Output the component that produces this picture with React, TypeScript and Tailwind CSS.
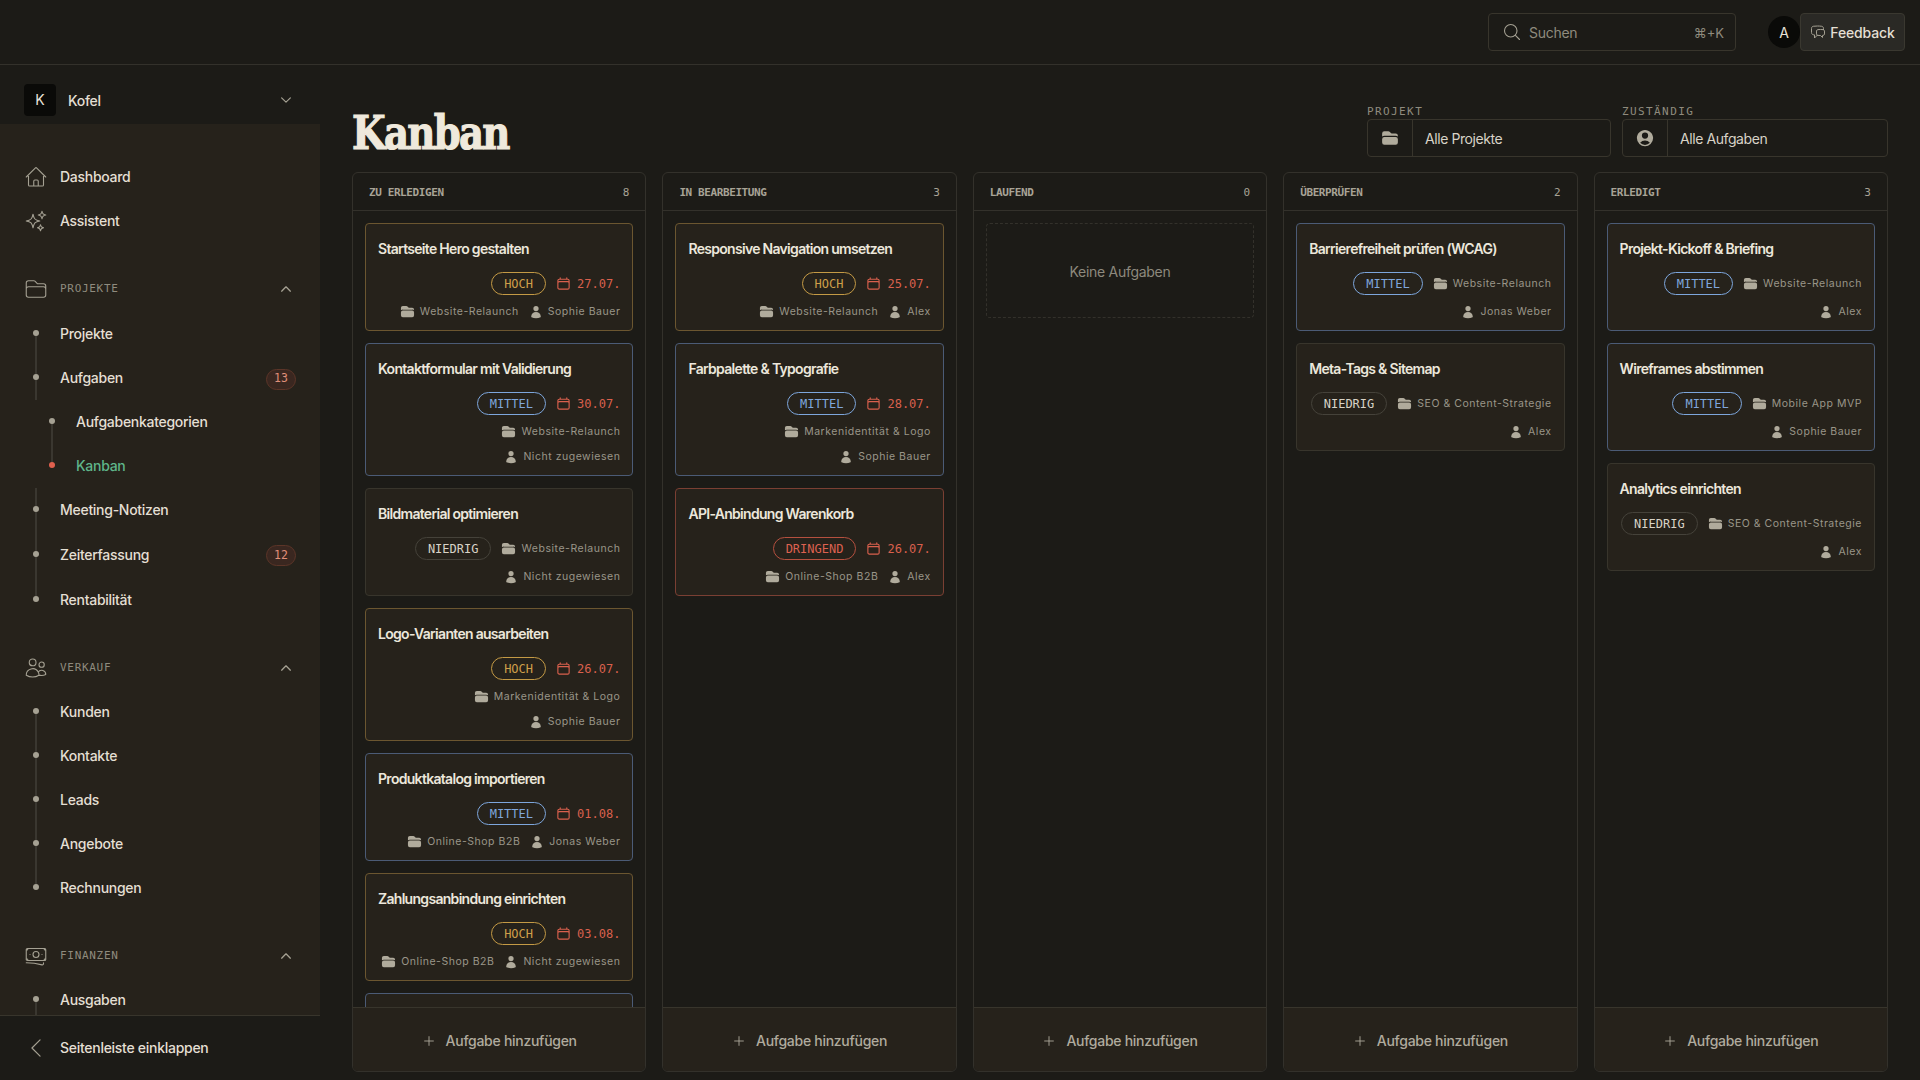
import { ReactNode } from "react";
import {
  HiFolder,
  HiOutlineBanknotes,
  HiOutlineCalendar,
  HiOutlineChatBubbleLeftRight,
  HiOutlineChevronDown,
  HiOutlineChevronLeft,
  HiOutlineChevronUp,
  HiOutlineFolder,
  HiOutlineHome,
  HiOutlineMagnifyingGlass,
  HiOutlinePlus,
  HiOutlineSparkles,
  HiOutlineUsers,
  HiUser,
  HiUserCircle,
} from "react-icons/hi2";

type Priority = "HOCH" | "MITTEL" | "NIEDRIG" | "DRINGEND";

interface Task {
  title: string;
  priority: Priority;
  date?: string;
  project: string;
  person: string;
}

interface Column {
  name: string;
  count: number;
  tasks: Task[];
  clipped?: boolean;
}

const cardBorders: Record<Priority, string> = {
  HOCH: "border-[#6b5630]",
  MITTEL: "border-[#4b5b76]",
  NIEDRIG: "border-[#38352c]",
  DRINGEND: "border-[#7a3f33]",
};

const pills: Record<Priority, string> = {
  HOCH: "border-[#c49a45] text-[#cf9f4a]",
  MITTEL: "border-[#7da6dc] text-[#7fa6dc]",
  NIEDRIG: "border-[#45423a] text-[#d8d3c7]",
  DRINGEND: "border-[#b5503f] text-[#dd6150]",
};

const columns: Column[] = [
  {
    name: "ZU ERLEDIGEN",
    count: 8,
    clipped: true,
    tasks: [
      { title: "Startseite Hero gestalten", priority: "HOCH", date: "27.07.", project: "Website-Relaunch", person: "Sophie Bauer" },
      { title: "Kontaktformular mit Validierung", priority: "MITTEL", date: "30.07.", project: "Website-Relaunch", person: "Nicht zugewiesen" },
      { title: "Bildmaterial optimieren", priority: "NIEDRIG", project: "Website-Relaunch", person: "Nicht zugewiesen" },
      { title: "Logo-Varianten ausarbeiten", priority: "HOCH", date: "26.07.", project: "Markenidentität & Logo", person: "Sophie Bauer" },
      { title: "Produktkatalog importieren", priority: "MITTEL", date: "01.08.", project: "Online-Shop B2B", person: "Jonas Weber" },
      { title: "Zahlungsanbindung einrichten", priority: "HOCH", date: "03.08.", project: "Online-Shop B2B", person: "Nicht zugewiesen" },
    ],
  },
  {
    name: "IN BEARBEITUNG",
    count: 3,
    tasks: [
      { title: "Responsive Navigation umsetzen", priority: "HOCH", date: "25.07.", project: "Website-Relaunch", person: "Alex" },
      { title: "Farbpalette & Typografie", priority: "MITTEL", date: "28.07.", project: "Markenidentität & Logo", person: "Sophie Bauer" },
      { title: "API-Anbindung Warenkorb", priority: "DRINGEND", date: "26.07.", project: "Online-Shop B2B", person: "Alex" },
    ],
  },
  { name: "LAUFEND", count: 0, tasks: [] },
  {
    name: "ÜBERPRÜFEN",
    count: 2,
    tasks: [
      { title: "Barrierefreiheit prüfen (WCAG)", priority: "MITTEL", project: "Website-Relaunch", person: "Jonas Weber" },
      { title: "Meta-Tags & Sitemap", priority: "NIEDRIG", project: "SEO & Content-Strategie", person: "Alex" },
    ],
  },
  {
    name: "ERLEDIGT",
    count: 3,
    tasks: [
      { title: "Projekt-Kickoff & Briefing", priority: "MITTEL", project: "Website-Relaunch", person: "Alex" },
      { title: "Wireframes abstimmen", priority: "MITTEL", project: "Mobile App MVP", person: "Sophie Bauer" },
      { title: "Analytics einrichten", priority: "NIEDRIG", project: "SEO & Content-Strategie", person: "Alex" },
    ],
  },
];

function TreeRow({
  label,
  badge,
  active,
  nested,
  first,
  last,
  tall,
}: {
  label: string;
  badge?: number;
  active?: boolean;
  nested?: boolean;
  first?: boolean;
  last?: boolean;
  tall?: boolean;
}) {
  return (
    <div className={`relative flex items-center pr-6 ${tall ? "h-[45px]" : "h-11"} ${nested ? "pl-[76px]" : "pl-[60px]"}`}>
      {/* connector */}
      {!first && <span className={`absolute top-0 h-1/2 w-0.5 bg-[#3a3730] ${nested ? "left-[51px]" : "left-[35px]"}`} />}
      {!last && <span className={`absolute bottom-0 h-1/2 w-0.5 bg-[#3a3730] ${nested ? "left-[51px]" : "left-[35px]"}`} />}
      <span
        className={`absolute top-[calc(50%-4px)] size-1.5 rounded-full ${nested ? "left-[49px]" : "left-[33px]"} ${
          active ? "bg-[#e0604e]" : "bg-[#a5a193]"
        }`}
      />
      <span className={`flex-1 text-sm font-medium tracking-[-0.02em] ${active ? "text-[#5fb58a]" : "text-[#e4dfd3]"}`}>{label}</span>
      {badge !== undefined && (
        <span className="mt-0.5 flex h-[21px] w-[30px] items-center justify-center rounded-full border border-[#5c3528] bg-[#3a2720] font-['DejaVu_Sans_Mono',monospace] text-[11.5px] text-[#e08f7a]">
          {badge}
        </span>
      )}
    </div>
  );
}

function SectionHead({ icon, label }: { icon: ReactNode; label: string }) {
  return (
    <div className="flex h-[45px] items-center pl-6 pr-[27px]">
      <span className="flex w-9 text-[#a5a193]">{icon}</span>
      <span className="flex-1 pt-px font-['DejaVu_Sans_Mono',monospace] text-[11px] tracking-[0.7px] text-[#8f8b7e]">{label}</span>
      <HiOutlineChevronUp className="size-[14px] text-[#a5a193]" strokeWidth={2.2} />
    </div>
  );
}

function Sidebar() {
  return (
    <aside className="flex w-80 shrink-0 flex-col">
      <div className="h-[59px] pl-6 pr-[27px] pt-[19px]">
        <div className="flex h-8 items-center">
          <span className="flex size-8 items-center justify-center rounded bg-[#0a0a08] text-sm text-[#e8e3d8]">K</span>
          <span className="ml-3 flex-1 pt-0.5 text-sm font-medium tracking-[-0.02em] text-[#e4dfd3]">Kofel</span>
          <HiOutlineChevronDown className="size-[14px] text-[#a5a193]" strokeWidth={2} />
        </div>
      </div>

      <nav className="min-h-0 flex-1 overflow-hidden bg-[#26221b] pt-[31px]">
        <div className="flex h-11 items-center pl-6 text-sm font-medium tracking-[-0.02em] text-[#e4dfd3]">
          <HiOutlineHome className="mr-3 size-6 text-[#a5a193]" strokeWidth={1.1} />
          Dashboard
        </div>
        <div className="flex h-11 items-center pl-6 text-sm font-medium tracking-[-0.02em] text-[#e4dfd3]">
          <HiOutlineSparkles className="mr-3 size-6 text-[#a5a193]" strokeWidth={1.1} />
          Assistent
        </div>

        <div className="mt-[23px]">
          <SectionHead icon={<HiOutlineFolder className="size-6" strokeWidth={1.1} />} label="PROJEKTE" />
          <TreeRow label="Projekte" first tall />
          <TreeRow label="Aufgaben" badge={13} />
          <TreeRow label="Aufgabenkategorien" nested first />
          <TreeRow label="Kanban" nested last active />
          <TreeRow label="Meeting-Notizen" />
          <TreeRow label="Zeiterfassung" badge={12} tall />
          <TreeRow label="Rentabilität" last tall />
        </div>

        <div className="mt-[23px]">
          <SectionHead icon={<HiOutlineUsers className="size-6" strokeWidth={1.1} />} label="VERKAUF" />
          <TreeRow label="Kunden" first />
          <TreeRow label="Kontakte" />
          <TreeRow label="Leads" />
          <TreeRow label="Angebote" />
          <TreeRow label="Rechnungen" last />
        </div>

        <div className="mt-[23px]">
          <SectionHead icon={<HiOutlineBanknotes className="size-6" strokeWidth={1.1} />} label="FINANZEN" />
          <TreeRow label="Ausgaben" first />
        </div>
      </nav>

      <div className="flex h-[65px] items-center border-t border-[#38352c] pl-[23px] text-sm font-medium tracking-[-0.02em] text-[#e4dfd3]">
        <HiOutlineChevronLeft className="mr-[11px] size-[26px] text-[#a5a193]" strokeWidth={1.1} />
        Seitenleiste einklappen
      </div>
    </aside>
  );
}

function TaskCard({ task }: { task: Task }) {
  return (
    <div className={`shrink-0 rounded border bg-[#26221b] px-3 pt-3 pb-[10px] ${cardBorders[task.priority]}`}>
      <h3 className="mb-[10px] text-sm leading-[26px] font-semibold tracking-[-0.05em] text-[#ece7db]">{task.title}</h3>
      <div className="flex flex-wrap items-center justify-end gap-x-[10px] gap-y-2">
        <span
          className={`flex h-[23px] items-center rounded-full border px-3 font-['DejaVu_Sans_Mono',monospace] text-xs ${pills[task.priority]}`}
        >
          {task.priority}
        </span>
        {task.date && (
          <span className="flex items-center gap-1.5 font-['DejaVu_Sans_Mono',monospace] text-xs text-[#d9604d]">
            <HiOutlineCalendar className="size-[15px]" strokeWidth={1.8} />
            {task.date}
          </span>
        )}
        <span className="flex h-[17px] items-center gap-[5px] text-[10.5px] tracking-[0.05em] text-[#9a9689]">
          <HiFolder className="size-[15px] text-[#b0ab9c]" />
          {task.project}
        </span>
        <span className="flex h-[17px] items-center gap-[5px] text-[10.5px] tracking-[0.05em] text-[#9a9689]">
          <HiUser className="size-[14px] text-[#b0ab9c]" />
          {task.person}
        </span>
      </div>
    </div>
  );
}

function BoardColumn({ column }: { column: Column }) {
  return (
    <section className="flex min-h-0 min-w-0 flex-col overflow-hidden rounded-md border border-[#33312b]">
      <header className="flex h-[38px] shrink-0 items-center justify-between border-b border-[#33312b] px-4 pt-1 font-['DejaVu_Sans_Mono',monospace] text-[11px] text-[#a8a396]">
        <span className="font-bold tracking-[-0.4px]">{column.name}</span>
        <span>{column.count}</span>
      </header>
      <div className="flex min-h-0 flex-1 flex-col gap-3 overflow-hidden p-3">
        {column.tasks.map((task) => (
          <TaskCard key={task.title} task={task} />
        ))}
        {column.clipped && <div className="h-24 shrink-0 rounded border border-[#4b5b76] bg-[#26221b]" />}
        {column.tasks.length === 0 && (
          <div className="flex h-[95px] items-center justify-center rounded border border-dashed border-[#33312b] pt-0.5 text-sm tracking-[-0.02em] text-[#8d897d]">
            Keine Aufgaben
          </div>
        )}
      </div>
      <button className="flex h-[64px] shrink-0 items-center justify-center gap-2.5 border-t border-[#38352c] bg-[#26221b] pt-[3px] text-sm font-medium tracking-[-0.02em] text-[#b0ab9e]">
        <HiOutlinePlus className="size-3.5" />
        Aufgabe hinzufügen
      </button>
    </section>
  );
}

function Filter({ label, value, icon, width }: { label: string; value: string; icon: ReactNode; width: string }) {
  return (
    <div className={width}>
      <div className="h-[15px] font-['DejaVu_Sans_Mono',monospace] text-[11px] leading-[16px] tracking-[1.4px] text-[#8f8b7e]">
        {label}
      </div>
      <div className="flex h-[38px] items-center rounded border border-[#38352c] text-sm tracking-[-0.03em] text-[#d8d3c7]">
        <span className="flex h-full w-[45px] items-center justify-center border-r border-[#38352c] text-[#b0ab9c]">{icon}</span>
        <span className="pl-3 pt-0.5">{value}</span>
      </div>
    </div>
  );
}

export default function App() {
  return (
    <div className="flex h-screen flex-col overflow-hidden bg-[#1c1b17] font-['Inter',sans-serif] text-[#e4dfd3]">
      {/* Top bar */}
      <header className="flex h-[65px] shrink-0 items-center justify-end border-b border-[#33312b] pr-[15px]">
        <div className="mr-[32px] flex h-[38px] w-[248px] items-center rounded border border-[#38352c] pl-[13px] pr-[11px] text-sm text-[#8f8b7e]">
          <HiOutlineMagnifyingGlass className="mr-[7px] size-5 text-[#a5a193]" strokeWidth={1.3} />
          <span className="flex-1 pt-0.5 tracking-[-0.02em]">Suchen</span>
          <span className="pt-0.5 text-[13px]">⌘+K</span>
        </div>
        <span className="flex size-8 items-center justify-center rounded-full bg-[#0a0a08] pt-0.5 text-sm text-[#e8e3d8]">A</span>
        <button className="flex h-[38px] w-[105px] items-center justify-center gap-1 rounded border border-[#3a3830] bg-[#2a2925] text-sm font-medium tracking-[-0.01em] text-[#e4dfd3]">
          <HiOutlineChatBubbleLeftRight className="size-4 text-[#a5a193]" />
          <span className="pt-0.5">Feedback</span>
        </button>
      </header>

      <div className="flex min-h-0 flex-1">
        <Sidebar />

        <main className="flex min-w-0 flex-1 flex-col px-8 pb-2">
          <div className="flex h-[107px] shrink-0 items-end justify-between pb-[15px]">
            <h1 className="mb-[2px] origin-left scale-x-[0.84] font-['DejaVu_Serif','Liberation_Serif',serif] text-[46px] leading-[44px] font-bold tracking-[-2px] text-[#efe9dc] [-webkit-text-stroke:1.2px_#efe9dc]">
              Kanban
            </h1>
            <div className="flex gap-[11px]">
              <Filter label="PROJEKT" value="Alle Projekte" width="w-[244px]" icon={<HiFolder className="size-[18px]" />} />
              <Filter label="ZUSTÄNDIG" value="Alle Aufgaben" width="w-[266px]" icon={<HiUserCircle className="size-5" />} />
            </div>
          </div>

          <div className="grid min-h-0 flex-1 grid-cols-5 gap-4">
            {columns.map((column) => (
              <BoardColumn key={column.name} column={column} />
            ))}
          </div>
        </main>
      </div>
    </div>
  );
}
